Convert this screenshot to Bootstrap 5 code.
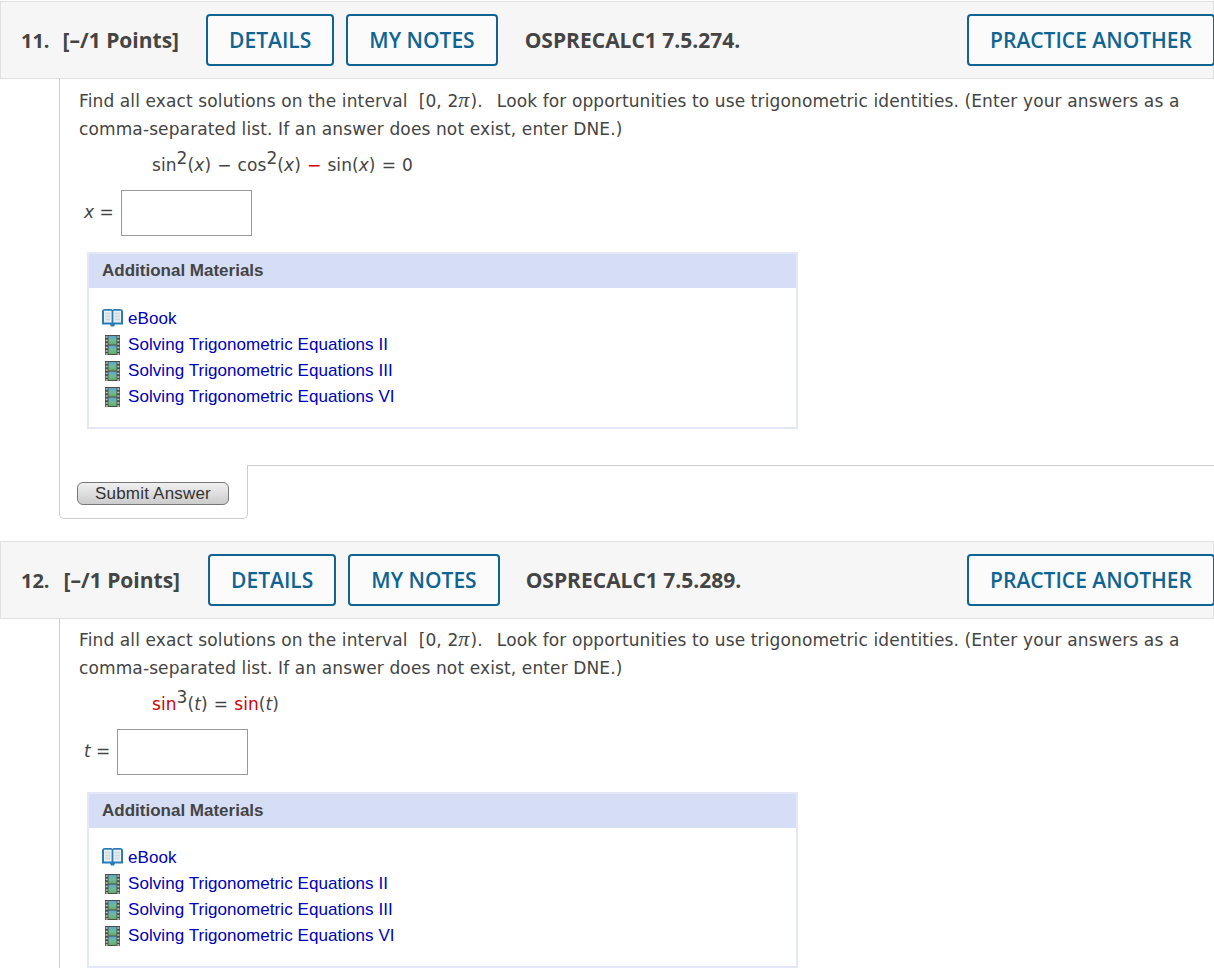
<!DOCTYPE html>
<html lang="en">
<head>
    <meta charset="UTF-8" />
    <title>Assignment</title>
    <link rel="stylesheet" href="https://cdn.jsdelivr.net/npm/bootstrap@5.3.0/dist/css/bootstrap.min.css" />
    <style>
        body { background: #fff; color: #444; font-family: "DejaVu Sans", Verdana, sans-serif; font-size: 17px; }
        .q-head { height: 78px; margin-top: 1px; padding: 0 0 0 20px; background: #f6f6f6; border: 1px solid #e0e0e0; font-family: "Open Sans", sans-serif; font-weight: 700; font-size: 21px; color: #444; }
        .q-second { margin-top: 22px; }
        .q-num { font-size: 20px; margin-right: 13px; padding-top: 2px; }
        .q-points { margin-right: 27px; padding-top: 2px; }
        .q-btn { height: 52px; padding: 0 21px; border: 2px solid #0f6493; border-radius: 4px; background: #fbfbfb; color: #0f6493; font-family: inherit; font-size: 21px; font-weight: 600; line-height: 48px; }
        .q-code { margin-left: 27px; padding-top: 2px; }
        .q-second .q-num { margin-right: 14px; }
        .q-second .q-points { margin-right: 28px; }
        .q-second .q-code { margin-left: 26px; }
        .q-practice { margin-right: -2px; }
        .q-body { margin-left: 59px; padding: 8px 0 0 19px; border-left: 1px solid #ccc; }
        .q-text { line-height: 28px; margin: 0; width: 1120px; letter-spacing: .12px; }
        .q-math { margin: 8px 0 0 73px; line-height: 28px; letter-spacing: .08px; word-spacing: .6px; }
        .q-math sup { font-size: 17px; top: -.4em; line-height: 0; }
        .q-red { color: #d40000; }
        .q-pi { font-family: "Liberation Serif", serif; font-style: italic; font-size: 22px; line-height: 0; margin-right: 1px; }
        .q-dot { margin-right: 3px; }
        .q-answer { margin: 11px 0 0 5px; height: 46px; }
        .q-var { margin-right: 7px; }
        .q-input { width: 131px; height: 46px; border: 1px solid #999; border-radius: 0; }
        .q-mats { width: 711px; margin: 16px 0 0 8px; border: 2px solid #e3e7f7; border-radius: 0; font-family: "Liberation Sans", Arial, sans-serif; }
        .q-mats .card-header { height: 34px; padding: 0 0 0 13px; background: #d6def6; border: 0; border-radius: 0; font-weight: 700; font-size: 17px; line-height: 34px; color: #444; }
        .q-mats .card-body { padding: 18px 13px 17px; }
        .q-mats li { height: 26px; line-height: 26px; display: flex; align-items: center; gap: 5px; }
        .q-mats a { color: #0000c0; text-decoration: none; font-size: 17px; letter-spacing: .06px; }
        .q-icon { width: 21px; height: 20px; flex: none; }
        .q-gap { height: 36px; }
        .q-foot { margin-left: 59px; height: 54px; }
        .q-tab { width: 189px; padding: 17px 0 0 17px; border: 1px solid #ccc; border-top: 0; border-radius: 0 0 5px 5px; }
        .q-rest { border-top: 1px solid #ccc; }
        .q-submit { display: block; width: 152px; height: 23px; padding: 1px 0 0; background: linear-gradient(#f0f0f0, #ccc); border: 1px solid #777; border-radius: 6px; color: #333; font-family: "Liberation Sans", Arial, sans-serif; font-size: 17px; letter-spacing: .2px; line-height: 20px; }
        .q-next { padding-top: 7px; }
        .q-next .q-mats { margin-top: 17px; }
        .q-next .q-mats .card-body { padding-top: 17px; }
    </style>
</head>
<body class="overflow-hidden vh-100">

<svg width="0" height="0" class="position-absolute">
    <defs>
        <linearGradient id="filmFill" x1="0" y1="0" x2="0" y2="1">
            <stop offset="0" stop-color="#5aa6d2" />
            <stop offset=".5" stop-color="#6cbc9c" />
            <stop offset="1" stop-color="#62ad68" />
        </linearGradient>
        <symbol id="bookIcon" viewBox="0 0 21 20">
            <path d="M0 2.500C0 .8 1.500 0 3 0h5.500c1 0 1.600.4 2 1 .4-.6 1-1 2-1H18c1.500 0 3 .8 3 2.500V15.500h-8l-1 2h-3l-1-2H0z" fill="#2a7cb6" />
            <path d="M2 1.800h7.600v11.700H2zM11.400 1.800H19v11.700h-7.600z" fill="#eef2f4" />
            <path d="M3.300 3.500h5v8h-5zM12.700 3.500h5v8h-5z" fill="#cfd8dc" />
            <path d="M3.300 6h5M3.300 9h5M12.700 6h5M12.700 9h5" stroke="#eef2f4" stroke-width="1" />
        </symbol>
        <symbol id="filmIcon" viewBox="0 0 21 20">
            <rect x="3" y="0" width="15" height="20" fill="#4c5048" />
            <rect x="6.500" y="1" width="8" height="8.500" fill="url(#filmFill)" />
            <rect x="6.500" y="10.500" width="8" height="8.500" fill="url(#filmFill)" />
            <path d="M3.700 2h2M3.700 5.500h2M3.700 9h2M3.700 12.500h2M3.700 16h2M3.700 19h2M15.300 2h2M15.300 5.500h2M15.300 9h2M15.300 12.500h2M15.300 16h2M15.300 19h2" stroke="#c6c8be" stroke-width="1.300" />
        </symbol>
    </defs>
</svg>

<div class="q-head d-flex align-items-center">
    <span class="q-num">11.</span>
    <span class="q-points">[&ndash;/1 Points]</span>
    <button class="btn q-btn me-2">DETAILS</button>
    <button class="btn q-btn ms-1">MY NOTES</button>
    <span class="q-code">OSPRECALC1 7.5.274.</span>
    <button class="btn q-btn q-practice ms-auto">PRACTICE ANOTHER</button>
</div>
<div class="q-body">
    <p class="q-text">Find all exact solutions on the interval&nbsp; [0, 2<span class="q-pi">&pi;</span>).<span class="q-dot">&nbsp;</span> Look for opportunities to use trigonometric identities. (Enter your answers as a comma-separated list. If an answer does not exist, enter DNE.)</p>
    <div class="q-math">sin<sup>2</sup>(<i>x</i>) &minus; cos<sup>2</sup>(<i>x</i>) <span class="q-red">&minus;</span> sin(<i>x</i>) = 0</div>
    <div class="q-answer d-flex align-items-center">
        <span class="q-var"><i>x</i> =</span>
        <input type="text" class="q-input" />
    </div>
    <div class="card q-mats">
        <div class="card-header">Additional Materials</div>
        <div class="card-body">
            <ul class="list-unstyled mb-0">
                <li><svg class="q-icon"><use href="#bookIcon" /></svg><a href="#">eBook</a></li>
                <li><svg class="q-icon"><use href="#filmIcon" /></svg><a href="#">Solving Trigonometric Equations II</a></li>
                <li><svg class="q-icon"><use href="#filmIcon" /></svg><a href="#">Solving Trigonometric Equations III</a></li>
                <li><svg class="q-icon"><use href="#filmIcon" /></svg><a href="#">Solving Trigonometric Equations VI</a></li>
            </ul>
        </div>
    </div>
    <div class="q-gap"></div>
</div>
<div class="q-foot d-flex">
    <div class="q-tab"><button class="q-submit">Submit Answer</button></div>
    <div class="q-rest flex-grow-1"></div>
</div>

<div class="q-head q-second d-flex align-items-center">
    <span class="q-num">12.</span>
    <span class="q-points">[&ndash;/1 Points]</span>
    <button class="btn q-btn me-2">DETAILS</button>
    <button class="btn q-btn ms-1">MY NOTES</button>
    <span class="q-code">OSPRECALC1 7.5.289.</span>
    <button class="btn q-btn q-practice ms-auto">PRACTICE ANOTHER</button>
</div>
<div class="q-body q-next">
    <p class="q-text">Find all exact solutions on the interval&nbsp; [0, 2<span class="q-pi">&pi;</span>).<span class="q-dot">&nbsp;</span> Look for opportunities to use trigonometric identities. (Enter your answers as a comma-separated list. If an answer does not exist, enter DNE.)</p>
    <div class="q-math"><span class="q-red">sin</span><sup>3</sup>(<i>t</i>) = <span class="q-red">sin</span>(<i>t</i>)</div>
    <div class="q-answer d-flex align-items-center">
        <span class="q-var"><i>t</i> =</span>
        <input type="text" class="q-input" />
    </div>
    <div class="card q-mats">
        <div class="card-header">Additional Materials</div>
        <div class="card-body">
            <ul class="list-unstyled mb-0">
                <li><svg class="q-icon"><use href="#bookIcon" /></svg><a href="#">eBook</a></li>
                <li><svg class="q-icon"><use href="#filmIcon" /></svg><a href="#">Solving Trigonometric Equations II</a></li>
                <li><svg class="q-icon"><use href="#filmIcon" /></svg><a href="#">Solving Trigonometric Equations III</a></li>
                <li><svg class="q-icon"><use href="#filmIcon" /></svg><a href="#">Solving Trigonometric Equations VI</a></li>
            </ul>
        </div>
    </div>
</div>

<script src="https://cdn.jsdelivr.net/npm/bootstrap@5.3.0/dist/js/bootstrap.bundle.min.js"></script>
</body>
</html>
